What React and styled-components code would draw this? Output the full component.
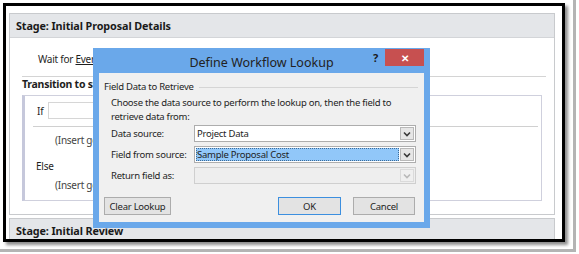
import React from "react";
import styled, { createGlobalStyle } from "styled-components";

const GlobalStyle = createGlobalStyle`
  html, body {
    margin: 0;
    background: #fff;
  }
  body {
    font-family: "Noto Sans", "Open Sans", sans-serif;
    font-size: 9.5px;
    letter-spacing: -0.25px;
    color: #1e1e1e;
  }
`;

const Outer = styled.div`
  width: 576px;
  height: 252px;
  box-sizing: border-box;
  padding: 3px 0 0 3px;
  border-right: 3px solid #b4b4b4;
  border-bottom: 3px solid #b4b4b4;
`;

const Frame = styled.div`
  position: relative;
  width: 562px;
  height: 239px;
  box-sizing: border-box;
  border: 3px solid #000;
  box-shadow: 3px 3px 3px rgba(0, 0, 0, 0.45);
  background: #fff;
  overflow: hidden;
  padding: 7px 7px 0 3px;
  display: flex;
  flex-direction: column;
  gap: 3px;
`;

const Panel = styled.div`
  border: 1px solid #c8cacd;
  background: #fff;
  height: ${(p) => p.$h || "auto"};
  flex-shrink: 0;
`;

const PanelHeader = styled.div`
  height: 23px;
  background: #e4e6e9;
  border-bottom: ${(p) => (p.$open ? "1px solid #d3d5d8" : "none")};
  padding-left: 6px;
  display: flex;
  align-items: center;
  font-weight: bold;
  font-size: 10.8px;
  letter-spacing: -0.1px;
  color: #1a1a1a;
`;

const PanelBody = styled.div`
  display: flex;
  flex-direction: column;
`;

const WaitRow = styled.div`
  margin: 14px 0 0 28px;
  line-height: 14px;
  font-size: 10px;
`;

const Link = styled.span`
  text-decoration: underline;
  color: #1e1e1e;
`;

const Transition = styled.div`
  margin: 10px 8px 0 12px;
  border-top: 1px solid #d4d4d4;
`;

const TransitionTitle = styled.div`
  font-weight: bold;
  font-size: 10.5px;
  line-height: 14px;
  padding-top: 0;
`;

const ConditionBox = styled.div`
  margin: 4px 4px 0 0;
  height: 106px;
  box-sizing: border-box;
  border: 1px solid #cfd0dd;
  border-left: 3px solid #c6c8db;
  padding: 6px 3px 0 0;
  display: flex;
  flex-direction: column;
`;

const IfRow = styled.div`
  display: flex;
  align-items: center;
  padding-left: 12px;
  gap: 5px;
  font-size: 10px;
`;

const Input = styled.div`
  width: 300px;
  height: 17px;
  box-sizing: border-box;
  border: 1px solid #d6d6d6;
  background: #fff;
`;

const Separator = styled.div`
  margin: 7px 0 0 8px;
  border-top: 1px solid #d0d0d0;
`;

const Placeholder = styled.div`
  padding-left: 30px;
  line-height: 14px;
  margin-top: ${(p) => p.$mt}px;
  font-size: 10px;
  color: #444;
`;

const BranchLabel = styled.div`
  padding-left: 11px;
  line-height: 14px;
  margin-top: ${(p) => p.$mt}px;
  font-size: 10px;
`;

/* dialog */

const Dialog = styled.div`
  position: absolute;
  left: 87px;
  top: 42px;
  width: 337px;
  height: 180px;
  box-sizing: border-box;
  background: #6aa8ea;
  padding: 0 6px 6px;
  display: flex;
  flex-direction: column;
`;

const TitleBar = styled.div`
  height: 25px;
  display: grid;
  grid-template-columns: 1fr auto 1fr;
  align-items: center;
`;

const Title = styled.div`
  grid-column: 2;
  font-size: 12.5px;
  letter-spacing: 0;
  color: #222;
  padding-top: 3px;
`;

const TitleControls = styled.div`
  grid-column: 3;
  justify-self: end;
  align-self: start;
  display: flex;
  align-items: center;
  gap: 7px;
  padding-top: 1px;
`;

const Help = styled.span`
  font-weight: bold;
  font-size: 11px;
  color: #1a1a1a;
`;

const Close = styled.div`
  width: 39px;
  height: 17px;
  background: #c75050;
  display: flex;
  align-items: center;
  justify-content: center;
  color: #fff;
  font-weight: bold;
  font-size: 10px;
`;

const DialogBody = styled.div`
  flex: 1;
  background: #f0f0f0;
  padding: 7px 6px 0 5px;
  display: flex;
  flex-direction: column;
`;

const GroupLegend = styled.div`
  display: flex;
  align-items: center;
  gap: 5px;
  line-height: 14px;
  &::after {
    content: "";
    flex: 1;
    border-top: 1px solid #d5d5d5;
  }
`;

const Desc = styled.div`
  margin: 2px 0 0 7px;
  line-height: 14px;
  width: 300px;
`;

const Fields = styled.div`
  margin: 1px 0 0 7px;
  display: grid;
  grid-template-columns: 83px 222px;
  grid-auto-rows: 17px;
  row-gap: 4px;
  align-items: center;
`;

const Label = styled.div`
  line-height: 14px;
  white-space: nowrap;
`;

const Select = styled.div`
  height: 17px;
  box-sizing: border-box;
  border: 1px solid ${(p) => (p.$disabled ? "#cfcfcf" : "#adadad")};
  background: ${(p) => (p.$disabled ? "#eeeeee" : "#fff")};
  display: flex;
  align-items: stretch;
  padding: 1px;
`;

const SelectValue = styled.div`
  flex: 1;
  display: flex;
  align-items: center;
  padding-left: 1px;
  margin-right: 1px;
  background: ${(p) => (p.$selected ? "#91c7f9" : "transparent")};
  outline: ${(p) => (p.$selected ? "1px dotted #3d6c99" : "none")};
  outline-offset: -1px;
`;

const Arrow = styled.div`
  width: 14px;
  box-sizing: border-box;
  border: 1px solid ${(p) => (p.$disabled ? "#dadada" : "#b8b8b8")};
  background: ${(p) => (p.$disabled ? "#efefef" : "#e6e6e6")};
  display: flex;
  align-items: center;
  justify-content: center;
  color: ${(p) => (p.$disabled ? "#b8b8b8" : "#3a3a3a")};
`;

const ButtonRow = styled.div`
  margin-top: auto;
  margin-bottom: 7px;
  display: flex;
  align-items: center;
`;

const Button = styled.div`
  width: ${(p) => p.$w}px;
  height: 18px;
  box-sizing: border-box;
  border: 1px solid ${(p) => (p.$primary ? "#3c8fdf" : "#acacac")};
  background: #e3e3e3;
  display: flex;
  align-items: center;
  justify-content: center;
  margin-left: ${(p) => p.$ml || 0}px;
`;

const Chevron = () => (
  <svg width="8" height="6" viewBox="0 0 8 6">
    <path d="M1 1.5 L4 4.5 L7 1.5" fill="none" stroke="currentColor" strokeWidth="1.6" />
  </svg>
);

const Dropdown = ({ value, selected, disabled }) => (
  <Select $disabled={disabled}>
    <SelectValue $selected={selected}>{value}</SelectValue>
    <Arrow $disabled={disabled}>
      <Chevron />
    </Arrow>
  </Select>
);

export default function App() {
  return (
    <>
      <GlobalStyle />
      <Outer>
        <Frame>
          <Panel $h="200px">
            <PanelHeader $open>Stage: Initial Proposal Details</PanelHeader>
            <PanelBody>
              <WaitRow>
                Wait for <Link>Event: When project is submitted</Link>
              </WaitRow>
              <Transition>
                <TransitionTitle>Transition to stage</TransitionTitle>
                <ConditionBox>
                  <IfRow>
                    If <Input />
                  </IfRow>
                  <Separator />
                  <Placeholder $mt={6}>(Insert go to stage)</Placeholder>
                  <BranchLabel $mt={12}>Else</BranchLabel>
                  <Placeholder $mt={5}>(Insert go to stage)</Placeholder>
                </ConditionBox>
              </Transition>
            </PanelBody>
          </Panel>
          <Panel $h="40px">
            <PanelHeader>Stage: Initial Review</PanelHeader>
          </Panel>

          <Dialog>
            <TitleBar>
              <Title>Define Workflow Lookup</Title>
              <TitleControls>
                <Help>?</Help>
                <Close>✕</Close>
              </TitleControls>
            </TitleBar>
            <DialogBody>
              <GroupLegend>Field Data to Retrieve</GroupLegend>
              <Desc>
                Choose the data source to perform the lookup on, then the field to retrieve data from:
              </Desc>
              <Fields>
                <Label>Data source:</Label>
                <Dropdown value="Project Data" />
                <Label>Field from source:</Label>
                <Dropdown value="Sample Proposal Cost" selected />
                <Label>Return field as:</Label>
                <Dropdown value="" disabled />
              </Fields>
              <ButtonRow>
                <Button $w={67}>Clear Lookup</Button>
                <Button $w={63} $ml={107} $primary>
                  OK
                </Button>
                <Button $w={62} $ml={12}>
                  Cancel
                </Button>
              </ButtonRow>
            </DialogBody>
          </Dialog>
        </Frame>
      </Outer>
    </>
  );
}
